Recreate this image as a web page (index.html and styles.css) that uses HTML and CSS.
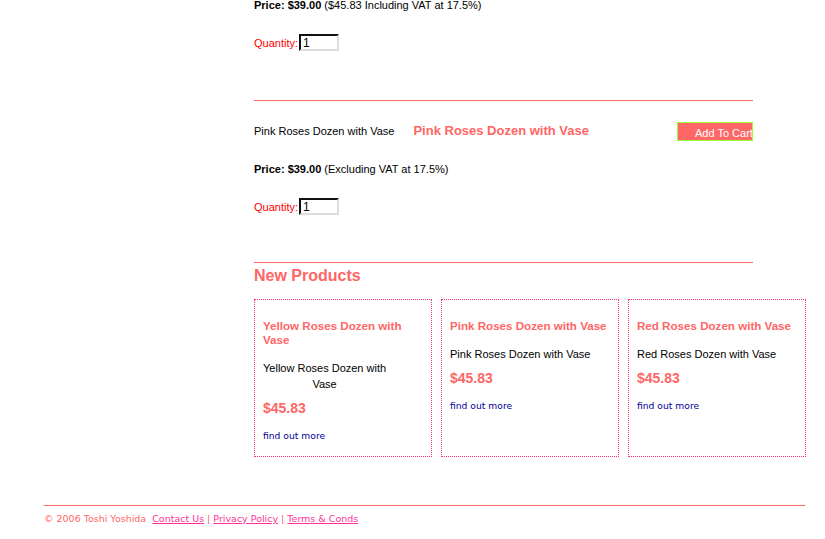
FILE: index.html
```html
<!DOCTYPE html>
<html lang="en">
<head>
  <meta charset="UTF-8">
  <title>Flowers - Products</title>
  <link rel="stylesheet" href="styles.css">
</head>
<body>
  <div class="page">
    <div class="main">
      <p class="price first"><b>Price: $39.00</b> ($45.83 Including VAT at 17.5%)</p>
      <p class="qty"><span>Quantity:</span><input type="text" value="1"></p>

      <div class="rule"></div>

      <div class="item-row">
        <span class="item-name">Pink Roses Dozen with Vase</span>
        <span class="item-title">Pink Roses Dozen with Vase</span>
        <button class="cart-btn">Add To Cart</button>
      </div>
      <p class="price"><b>Price: $39.00</b> (Excluding VAT at 17.5%)</p>
      <p class="qty tight"><span>Quantity:</span><input type="text" value="1"></p>

      <div class="rule tight"></div>

      <h2 class="section-title">New Products</h2>
      <div class="products">
        <div class="product">
          <h3>Yellow Roses Dozen with Vase</h3>
          <div class="desc">Yellow Roses Dozen with<br>Vase</div>
          <div class="cost">$45.83</div>
          <a href="#" class="more">find out more</a>
        </div>
        <div class="product">
          <h3>Pink Roses Dozen with Vase</h3>
          <div class="desc">Pink Roses Dozen with Vase</div>
          <div class="cost">$45.83</div>
          <a href="#" class="more">find out more</a>
        </div>
        <div class="product">
          <h3>Red Roses Dozen with Vase</h3>
          <div class="desc">Red Roses Dozen with Vase</div>
          <div class="cost">$45.83</div>
          <a href="#" class="more">find out more</a>
        </div>
      </div>
    </div>

    <div class="footer">
      &copy; 2006 Toshi Yoshida&nbsp;
      <a href="#">Contact Us</a> | <a href="#">Privacy Policy</a> | <a href="#">Terms &amp; Conds</a>
    </div>
  </div>
</body>
</html>
```

FILE: styles.css
```css
body {
  margin: 0;
  font-family: "Liberation Sans", Arial, sans-serif;
  font-size: 11px;
  color: #000;
  background: #fff;
}
.page {
  padding-left: 44px;
  width: 761px;
}
.main {
  margin-left: 210px;
  width: 499px;
}
p {
  margin: 0;
}
.price {
  line-height: 14px;
  margin-top: 21px;
}
.price.first {
  margin-top: -2px;
}
.qty {
  display: flex;
  align-items: center;
  height: 17px;
  margin-top: 22px;
  color: #f00;
}
.qty input {
  width: 32px;
  height: 13px;
  padding: 0 2px;
  margin: 0 0 0 1px;
  border: 2px inset #ccc;
  border-top-color: #666;
  border-left-color: #666;
  border-right-color: #ddd;
  border-bottom-color: #ddd;
  font-family: "Liberation Sans", Arial, sans-serif;
  font-size: 12px;
}
.rule {
  border-top: 1px solid #f66;
  margin-top: 49px;
}
.rule.tight {
  margin-top: 47px;
}
.item-row {
  display: flex;
  align-items: center;
  gap: 19px;
  height: 19px;
  margin-top: 21px;
}
.item-row span {
  margin-top: -2px;
}
.item-title {
  color: #f66;
  font-weight: bold;
  font-size: 13px;
}
.cart-btn {
  margin-left: auto;
  width: 76px;
  height: 19px;
  padding: 3px 0 0 17px;
  border: 1px solid #9f3;
  background: #f66;
  color: #fff;
  font-family: "Liberation Sans", Arial, sans-serif;
  font-size: 11px;
  text-align: left;
  white-space: nowrap;
  overflow: hidden;
}
.section-title {
  margin: 3px 0 0;
  font-size: 16px;
  line-height: 19px;
  color: #f66;
}
.products {
  display: flex;
  gap: 9px;
  width: 552px;
  margin-top: 14px;
}
.product {
  flex: 1;
  border: 1px dotted #f36;
  padding: 19px 8px 14px;
}
.product h3 {
  margin: 0;
  font-size: 11.6px;
  line-height: 14px;
  color: #f66;
}
.desc {
  display: inline-block;
  margin-top: 13px;
  line-height: 16px;
  text-align: center;
}
.cost {
  margin-top: 8px;
  font-size: 14px;
  font-weight: bold;
  line-height: 16px;
  color: #f66;
}
.more {
  display: block;
  margin-top: 14px;
  font-family: "DejaVu Sans", Verdana, sans-serif;
  font-size: 9.2px;
  line-height: 12px;
  color: #009;
  text-decoration: none;
}
.footer {
  margin-top: 48px;
  border-top: 1px solid #f66;
  padding-top: 7px;
  font-family: "DejaVu Sans", Verdana, sans-serif;
  font-size: 9.5px;
  line-height: 12px;
  color: #f66;
}
.footer a {
  color: #f39;
}
```
